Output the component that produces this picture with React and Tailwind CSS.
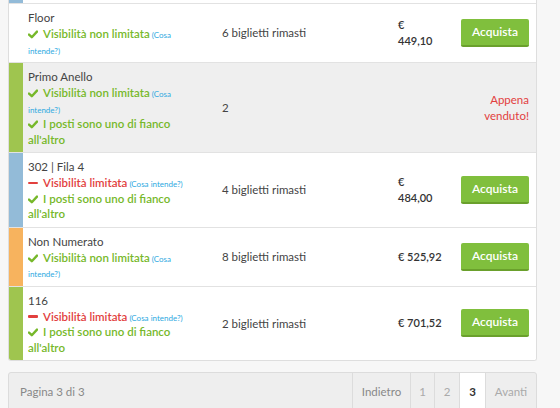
import React from 'react';

const Check = () => (
    <svg width="10" height="9" viewBox="0 0 10 9" className="inline-block mr-[5px] align-[-1px]">
        <path d="M1 4.6 L3.8 7.2 L9 1.6" fill="none" stroke="#76b82a" strokeWidth="2.4" strokeLinecap="round" strokeLinejoin="round" />
    </svg>
);

const Minus = () => (
    <span className="inline-block w-[10px] h-[2.5px] bg-[#e2403e] mr-[5px] align-[3px] rounded-[1px]"></span>
);

const Feature = ({ ok, text, link }) => (
    <div className={`font-semibold leading-[15.5px] ${ok ? 'text-[#76b82a]' : 'text-[#e2403e]'}`}>
        {ok ? <Check /> : <Minus />}
        {text}
        {link && <span className="text-[8px] leading-[9px] font-normal text-[#2ea9df]"> (Cosa intende?)</span>}
    </div>
);

const rows = [
    { name: 'Floor', strip: 'bg-white', bg: 'bg-white', vis: true, side: false, count: '6 biglietti rimasti', price: ['€', '449,10'] },
    { name: 'Primo Anello', strip: 'bg-[#9fc54f]', bg: 'bg-[#efefef]', vis: true, side: true, count: '2', sold: true },
    { name: '302 | Fila 4', strip: 'bg-[#93bbd8]', bg: 'bg-white', vis: false, side: true, count: '4 biglietti rimasti', price: ['€', '484,00'] },
    { name: 'Non Numerato', strip: 'bg-[#f7b35e]', bg: 'bg-white', vis: true, side: false, count: '8 biglietti rimasti', price: ['€ 525,92'] },
    { name: '116', strip: 'bg-[#9fc54f]', bg: 'bg-white', vis: false, side: true, count: '2 biglietti rimasti', price: ['€ 701,52'] },
];

const App = () => {
    return (
        <div className="w-[560px] h-[408px] overflow-hidden bg-[#f7f7f7] px-[8px] text-[11.5px] text-[#444]" style={{ fontFamily: 'Lato, "Open Sans", sans-serif' }}>
            <div className="w-[529px] bg-white border-x border-b border-[#dedede] rounded-b-[3px] overflow-hidden">
                <div className="flex h-[4px] border-b border-[#e2e2e2]">
                    <div className="w-[14px] bg-[#93bbd8]"></div>
                </div>
                {rows.map((r, i) => (
                    <div key={i} className={`flex ${r.bg} ${i < rows.length - 1 ? 'border-b border-[#e2e2e2]' : ''}`}>
                        <div className={`w-[14px] shrink-0 ${r.strip}`}></div>
                        <div className="w-[199px] shrink-0 pl-[5px] pr-[30px] pt-[6px] pb-[5px]">
                            <div className="leading-4 text-[#444]">{r.name}</div>
                            <Feature ok={r.vis} text={r.vis ? 'Visibilità non limitata' : 'Visibilità limitata'} link />
                            {r.side && <Feature ok text="I posti sono uno di fianco all'altro" />}
                        </div>
                        <div className="w-[176px] shrink-0 flex items-center">{r.count}</div>
                        {r.sold ? (
                            <div className="flex-1 flex items-center justify-end pr-[7px] text-right text-[#e2403e] leading-4">
                                Appena<br />venduto!
                            </div>
                        ) : (
                            <>
                                <div className="w-[63px] shrink-0 flex items-center text-[11px] font-semibold text-[#333] leading-4">
                                    <div>{r.price.map((p, j) => <div key={j}>{p}</div>)}</div>
                                </div>
                                <div className="flex-1 flex items-center pr-[7px]">
                                    <button className="w-[68px] h-[28px] rounded-[2px] bg-[#80bf3d] border-b-2 border-[#6aa02c] text-white font-semibold text-[12px]">
                                        Acquista
                                    </button>
                                </div>
                            </>
                        )}
                    </div>
                ))}
            </div>
            <div className="mt-[11px] w-[529px] h-[40px] flex bg-[#eeeeee] border border-[#dcdcdc] rounded-[3px] text-[#888]">
                <div className="flex-1 flex items-center pl-[11px]">Pagina 3 di 3</div>
                <div className="flex">
                    <div className="w-[58px] flex items-center justify-center border-l border-[#dcdcdc]">Indietro</div>
                    <div className="w-[24px] flex items-center justify-center border-l border-[#dcdcdc] text-[#aaa]">1</div>
                    <div className="w-[25px] flex items-center justify-center border-l border-[#dcdcdc] text-[#aaa]">2</div>
                    <div className="w-[26px] flex items-center justify-center border-l border-[#dcdcdc] bg-white font-bold text-[#333]">3</div>
                    <div className="w-[51px] flex items-center justify-center border-l border-[#dcdcdc] text-[#aaa]">Avanti</div>
                </div>
            </div>
        </div>
    );
};

export default App;
